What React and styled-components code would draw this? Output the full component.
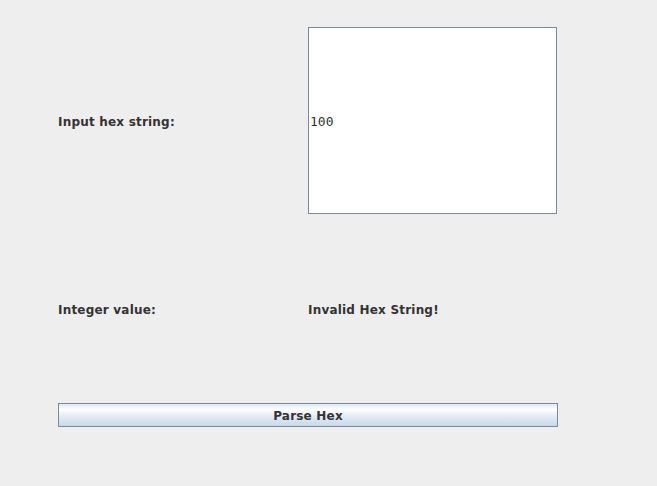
import React from "react";
import styled, { createGlobalStyle } from "styled-components";

const Global = createGlobalStyle`
  html, body {
    margin: 0;
    padding: 0;
    background: #eeeeee;
  }
  body {
    width: 657px;
    height: 486px;
    overflow: hidden;
    font-family: "DejaVu Sans", sans-serif;
  }
`;

const Frame = styled.div`
  display: grid;
  grid-template-columns: 250px 250px;
  grid-template-rows: 187px 189px 24px;
  padding: 27px 0 0 58px;
  width: 657px;
  height: 486px;
  box-sizing: border-box;
  background: #eeeeee;
`;

const Label = styled.div`
  display: flex;
  align-items: center;
  padding-top: 2px;
  font-size: 12px;
  font-weight: bold;
  letter-spacing: 0.2px;
  color: #333333;
`;

const HexInput = styled.input`
  box-sizing: border-box;
  width: 249px;
  height: 187px;
  margin: 0;
  padding: 2px 0 0 1px;
  border: 1px solid #7a8a99;
  background: #ffffff;
  font-family: "DejaVu Sans Mono", monospace;
  font-size: 13px;
  color: #333333;
  outline: none;
`;

const ParseButton = styled.button`
  grid-column: 1 / span 2;
  box-sizing: border-box;
  width: 500px;
  height: 24px;
  margin: 0;
  padding: 2px 0 0;
  border: 1px solid #7a8a99;
  background: linear-gradient(
    to bottom,
    #dde8f3 0%,
    #ffffff 25%,
    #e4ecf5 55%,
    #c8d8e9 100%
  );
  font-family: "DejaVu Sans", sans-serif;
  font-size: 12px;
  font-weight: bold;
  letter-spacing: 0.2px;
  color: #333333;
`;

export default function App() {
  return (
    <>
      <Global />
      <Frame>
        <Label>Input hex string:</Label>
        <HexInput defaultValue="100" />
        <Label>Integer value:</Label>
        <Label>Invalid Hex String!</Label>
        <ParseButton>Parse Hex</ParseButton>
      </Frame>
    </>
  );
}
